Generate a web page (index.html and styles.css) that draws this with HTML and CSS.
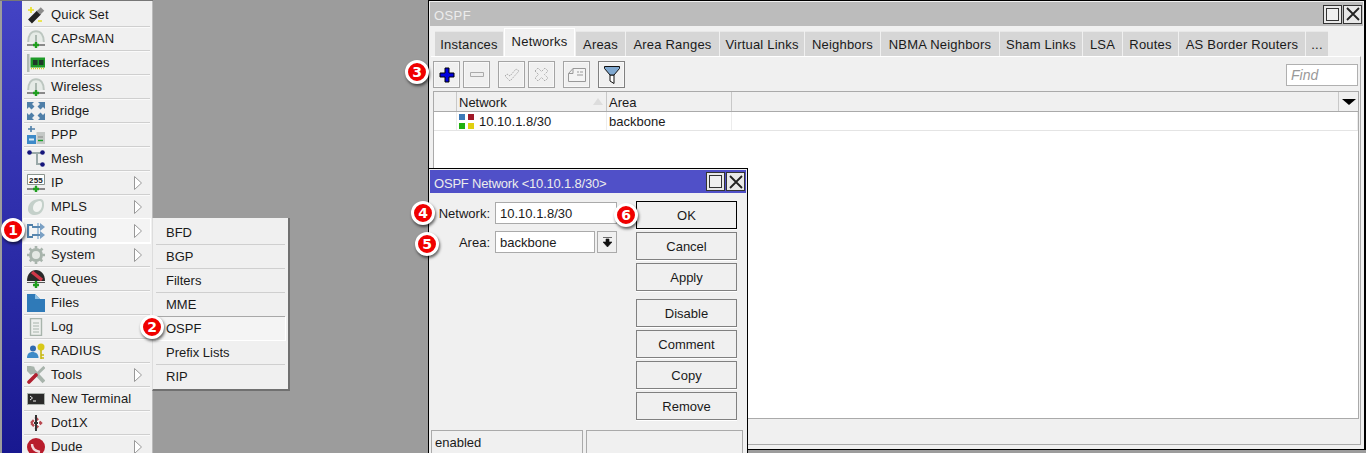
FILE: index.html
```html
<!DOCTYPE html>
<html lang="en">

<head>
    <meta charset="UTF-8">
    <meta name="viewport" content="width=device-width, initial-scale=1.0">
    <title>OSPF Network</title>
    <link rel="stylesheet" href="styles.css">
</head>

<body>
    <svg class="defs" width="0" height="0">
        <symbol id="i-antenna" viewBox="0 0 18 18">
            <path d="M1 12C1 5 4.5 1.2 9 1.2S17 5 17 12z" fill="#e6ebe7"/>
            <path d="M1.2 12C1.2 5 4.5 1.2 9 1.2s7.8 3.800 7.8 10.8" fill="none" stroke="#bcc6c0" stroke-width="2"/>
            <path d="M9 5v9" stroke="#9aa8a0" stroke-width="1.5"/>
            <path d="M0 15h18" stroke="#444" stroke-width="1.2"/>
            <path d="M9 12v6M6 15h6" stroke="#1f9e1f" stroke-width="2.4"/>
        </symbol>
        <symbol id="i-arrow" viewBox="0 0 8 14">
            <path d="M.5 .5L7.5 7 .5 13.5z" fill="#fff" stroke="#999"/>
        </symbol>
    </svg>

    <nav class="sidebar">
        <div class="side-strip"></div>
        <ul class="menu">
            <li class="item">
                <svg class="ico" viewBox="0 0 18 18"><path d="M3 15.5L12 6.5" stroke="#222" stroke-width="5.5"/><path d="M11.5 7L15.5 3" stroke="#8c8c8c" stroke-width="5"/><path d="M4 1v6M1 4h6M11 15h4" stroke="#e8e020" stroke-width="1.6"/></svg>
                <span>Quick Set</span>
            </li>
            <li class="item">
                <svg class="ico"><use href="#i-antenna"/></svg>
                <span>CAPsMAN</span>
            </li>
            <li class="item">
                <svg class="ico" viewBox="0 0 18 18"><path d="M0 0h2.500v18H0z" fill="#b0bab4"/><path d="M3.500 3.500h15v10h-15z" fill="#1e9a28"/><path d="M6 6h4.500v5H6zM12 6h4.500v5H12z" fill="#1f3a28"/><path d="M4 14.500h14" stroke="#d4d020" stroke-width="1.6" stroke-dasharray="1 1"/></svg>
                <span>Interfaces</span>
            </li>
            <li class="item">
                <svg class="ico"><use href="#i-antenna"/></svg>
                <span>Wireless</span>
            </li>
            <li class="item">
                <svg class="ico" viewBox="0 0 18 18" fill="#4f7fa8"><path d="M0 0h7L5 2l2.500 2.500-3 3L2 5 0 7zM18 0v7l-2-2-2.500 2.500-3-3L13 2l-2-2zM0 18v-7l2 2 2.500-2.500 3 3L5 16l2 2zM18 18h-7l2-2-2.500-2.500 3-3L16 13l2-2z"/></svg>
                <span>Bridge</span>
            </li>
            <li class="item">
                <svg class="ico" viewBox="0 0 18 18"><path d="M4 0v6M1 3h7" stroke="#4f7fa8" stroke-width="1.6"/><path d="M0 9h9v9H0z" fill="#3d8ac8"/><path d="M2 12.500h5v2H2z" fill="#d8eaf6"/><path d="M9.500 6H18v12H9.500z" fill="#c4c8c6"/><path d="M11 11h5" stroke="#888"/><path d="M11 14.500h5" stroke="#18a028" stroke-width="1.4"/></svg>
                <span>PPP</span>
            </li>
            <li class="item">
                <svg class="ico" viewBox="0 0 18 18"><path d="M3 3h13M10 3v11h6" fill="none" stroke="#9aa8a8" stroke-width="2"/><circle cx="2.5" cy="2.5" r="2.3" fill="#16167c"/><circle cx="15.5" cy="2.5" r="2.3" fill="#16167c"/><circle cx="15.5" cy="14.5" r="2.3" fill="#16167c"/></svg>
                <span>Mesh</span>
            </li>
            <li class="item">
                <svg class="ico" viewBox="0 0 18 18"><path d="M.5 .5h17v10H.5z" fill="#fff" stroke="#8a948e"/><text x="9" y="8.5" class="ico-text">255</text><path d="M9 10v3" stroke="#8a9a90"/><path d="M0 15h18" stroke="#444" stroke-width="1.2"/><path d="M9 12v6M6 15h6" stroke="#1f9e1f" stroke-width="2.4"/></svg>
                <span>IP</span>
                <svg class="arrow"><use href="#i-arrow"/></svg>
            </li>
            <li class="item">
                <svg class="ico" viewBox="0 0 18 18"><path d="M1 11C1 5 6 1 13 1c3 0 4 2 4 6 0 6-4 10-9 10-4 0-7-2-7-6z" fill="#c4d0ca"/><path d="M6 10c0-3 2-6 6-7 3 0 3 2 3 4 0 4-3 7-5 7-3 0-4-2-4-4z" fill="#f2f4f2"/></svg>
                <span>MPLS</span>
                <svg class="arrow"><use href="#i-arrow"/></svg>
            </li>
            <li class="item item-open">
                <svg class="ico" viewBox="0 0 18 18"><path d="M6 3H1v12h5" fill="none" stroke="#4f7fa8" stroke-width="2.2"/><path d="M11 1v16" stroke="#a8c4dc" stroke-width="2"/><path d="M5 5h8M5 13h8" stroke="#5a88b0" stroke-width="2.2"/><path d="M13 1l5 4-5 4zM13 9l5 4-5 4z" fill="#7aa0c4"/></svg>
                <span>Routing</span>
                <svg class="arrow"><use href="#i-arrow"/></svg>
            </li>
            <li class="item">
                <svg class="ico" viewBox="0 0 18 18"><circle cx="9" cy="9" r="5.5" fill="#e4e8e4" stroke="#a8b4ac" stroke-width="3"/><path d="M9 0v18M0 9h18M2.500 2.500l13 13M15.500 2.500l-13 13" stroke="#a8b4ac" stroke-width="2.6" stroke-dasharray="2.6 12.8"/></svg>
                <span>System</span>
                <svg class="arrow"><use href="#i-arrow"/></svg>
            </li>
            <li class="item">
                <svg class="ico" viewBox="0 0 18 18"><path d="M0 11C0 4 4 0 9 0s9 4 9 11z" fill="#2a2a2a"/><path d="M5 2l10 8" stroke="#d03848" stroke-width="3.4"/><path d="M0 12.500h18" stroke="#555"/><path d="M9 11v7M6 15h6" stroke="#1f9e1f" stroke-width="2.4"/></svg>
                <span>Queues</span>
            </li>
            <li class="item">
                <svg class="ico" viewBox="0 0 18 18"><path d="M0 0h8l5 5h5v13H0z" fill="#2f7ab8"/><path d="M8 0l5 5H8z" fill="#8cc0e4"/></svg>
                <span>Files</span>
            </li>
            <li class="item">
                <svg class="ico" viewBox="0 0 18 18"><path d="M3.500 .5h11v17h-11z" fill="#eef0ee" stroke="#a8b4ac" stroke-width="1.4"/><path d="M6 5h6M6 8h6M6 11h6M6 14h6" stroke="#a8b4ac"/></svg>
                <span>Log</span>
            </li>
            <li class="item">
                <svg class="ico" viewBox="0 0 18 18"><circle cx="6" cy="6.5" r="3" fill="#2f6ab0"/><path d="M0 16c0-4 2-6 5.500-6s6 2 6 6z" fill="#3d8ac8"/><circle cx="14" cy="5" r="3.5" fill="#d8c818"/><path d="M14 8v9M14 13h3M14 16h3" stroke="#c8b810" stroke-width="1.6"/></svg>
                <span>RADIUS</span>
            </li>
            <li class="item">
                <svg class="ico" viewBox="0 0 18 18"><path d="M4 2l13 14" stroke="#a8b4ac" stroke-width="4"/><path d="M1 1l5 1 1 4-3 1-3-3zM17.500 1L8 10" fill="#a8b4ac" stroke="#a8b4ac" stroke-width="3"/><path d="M9 9l-7 7" stroke="#b02030" stroke-width="3.6" stroke-linecap="round"/></svg>
                <span>Tools</span>
                <svg class="arrow"><use href="#i-arrow"/></svg>
            </li>
            <li class="item">
                <svg class="ico" viewBox="0 0 18 18"><path d="M.5 3.500h17v11H.5z" fill="#2a2a2a" stroke="#aab0ac"/><path d="M3 6l2.500 2L3 10M6 11h3" fill="none" stroke="#eee"/></svg>
                <span>New Terminal</span>
            </li>
            <li class="item">
                <svg class="ico" viewBox="0 0 18 18"><path d="M4 9l5-5 5 5-5 5z" fill="#fff" stroke="#b84850" stroke-width="2.4" stroke-dasharray="4 2"/><path d="M9 1v16" stroke="#333" stroke-width="2"/><path d="M7 9h4" stroke="#333" stroke-width="2"/></svg>
                <span>Dot1X</span>
            </li>
            <li class="item">
                <svg class="ico" viewBox="0 0 18 18"><circle cx="9" cy="9" r="9" fill="#b81c2c"/><path d="M5 6c0 5 3 7 8 8" fill="none" stroke="#f4d8dc" stroke-width="2.4"/></svg>
                <span>Dude</span>
                <svg class="arrow"><use href="#i-arrow"/></svg>
            </li>
        </ul>
    </nav>

    <ul class="submenu">
        <li class="sub-item">BFD</li>
        <li class="sub-item">BGP</li>
        <li class="sub-item">Filters</li>
        <li class="sub-item">MME</li>
        <li class="sub-item sub-active">OSPF</li>
        <li class="sub-item">Prefix Lists</li>
        <li class="sub-item">RIP</li>
    </ul>

    <section class="win win-ospf">
        <header class="titlebar titlebar-idle">
            <span class="title">OSPF</span>
            <div class="win-btn"><i class="max-box"></i></div>
            <div class="win-btn">
                <svg width="14" height="14" viewBox="0 0 14 14"><path d="M1 1l12 12M13 1L1 13" stroke="#222" stroke-width="1.8"/></svg>
            </div>
        </header>
        <div class="tabs">
            <div class="tab">Instances</div>
            <div class="tab tab-on">Networks</div>
            <div class="tab">Areas</div>
            <div class="tab">Area Ranges</div>
            <div class="tab">Virtual Links</div>
            <div class="tab">Neighbors</div>
            <div class="tab">NBMA Neighbors</div>
            <div class="tab">Sham Links</div>
            <div class="tab">LSA</div>
            <div class="tab">Routes</div>
            <div class="tab">AS Border Routers</div>
            <div class="tab">...</div>
        </div>
        <div class="panel">
            <div class="toolbar">
                <button class="tool">
                    <svg width="16" height="16" viewBox="0 0 16 16"><path d="M6 1h4v5h5v4h-5v5H6v-5H1V6h5z" fill="#0000e0" stroke="#000"/></svg>
                </button>
                <button class="tool">
                    <svg width="14" height="6" viewBox="0 0 14 6"><path d="M.5 .5h13v4H.5z" fill="#eee" stroke="#aaa"/></svg>
                </button>
                <button class="tool tool-group">
                    <svg width="16" height="14" viewBox="0 0 16 14"><path d="M1 8l2-2 3 2 6-7 3 2-9 10z" fill="none" stroke="#aaa" stroke-dasharray="1.5 1"/></svg>
                </button>
                <button class="tool">
                    <svg width="15" height="15" viewBox="0 0 15 15"><path d="M1 4l3-3 3.500 3.500L11 1l3 3-3.500 3.500L14 11l-3 3-3.500-3.500L4 14l-3-3 3.500-3.500z" fill="none" stroke="#aaa" stroke-dasharray="1.5 1"/></svg>
                </button>
                <button class="tool tool-group">
                    <svg width="18" height="14" viewBox="0 0 18 14"><path d="M.5 5.500L5 .5h12.500v13H.5zM.5 5.500H5V.5" fill="#f4f4f4" stroke="#999"/><path d="M9 4h2M12 4h3M9 7h6" stroke="#999"/></svg>
                </button>
                <button class="tool tool-group tool-dark">
                    <svg width="16" height="18" viewBox="0 0 16 18"><path d="M6 9h4v8.500L6 15z" fill="#fff" stroke="#111"/><path d="M.5 .5h15v2L10 9H6L.5 2.500z" fill="#7fa8d0" stroke="#111"/></svg>
                </button>
                <div class="find">Find</div>
            </div>
            <div class="table">
                <div class="thead">
                    <div class="cell cell-first"></div>
                    <div class="cell cell-net">Network<i class="sort"></i></div>
                    <div class="cell cell-area">Area</div>
                    <div class="cell cell-fill"></div>
                    <div class="cell cell-drop"><i class="drop-tri"></i></div>
                </div>
                <div class="row">
                    <div class="cell cell-first"></div>
                    <div class="cell cell-net">
                        <svg class="net-ico" width="15" height="15" viewBox="0 0 15 15"><path d="M0 0h6v6H0z" fill="#3d7ab8"/><path d="M9 0h6v6H9z" fill="#a01828"/><path d="M0 9h6v6H0z" fill="#20b010"/><path d="M9 9h6v6H9z" fill="#e0d010"/></svg>
                        10.10.1.8/30
                    </div>
                    <div class="cell cell-area">backbone</div>
                    <div class="cell cell-fill"></div>
                </div>
            </div>
        </div>
    </section>

    <section class="win win-dialog">
        <header class="titlebar titlebar-on">
            <span class="title">OSPF Network &lt;10.10.1.8/30&gt;</span>
            <div class="win-btn"><i class="max-box"></i></div>
            <div class="win-btn">
                <svg width="14" height="14" viewBox="0 0 14 14"><path d="M1 1l12 12M13 1L1 13" stroke="#222" stroke-width="1.8"/></svg>
            </div>
        </header>
        <div class="dlg-body">
            <div class="form">
                <div class="field">
                    <label>Network:</label>
                    <div class="input input-wide">10.10.1.8/30</div>
                </div>
                <div class="field">
                    <label>Area:</label>
                    <div class="input">backbone</div>
                    <div class="pick">
                        <svg width="9" height="10" viewBox="0 0 9 10"><path d="M0 .5h9M3 2h3v3h3L4.5 10 0 5h3z" fill="#111" stroke="#111" stroke-width=".6"/></svg>
                    </div>
                </div>
            </div>
            <div class="actions">
                <button class="act act-default">OK</button>
                <button class="act">Cancel</button>
                <button class="act act-gap">Apply</button>
                <button class="act">Disable</button>
                <button class="act">Comment</button>
                <button class="act">Copy</button>
                <button class="act">Remove</button>
            </div>
        </div>
        <div class="dlg-status">
            <div class="stat stat-a">enabled</div>
            <div class="stat stat-b"></div>
        </div>
    </section>

    <span class="badge badge-1">1</span>
    <span class="badge badge-2">2</span>
    <span class="badge badge-3">3</span>
    <span class="badge badge-4">4</span>
    <span class="badge badge-5">5</span>
    <span class="badge badge-6">6</span>
</body>

</html>
```
FILE: styles.css
```css
* {
    box-sizing: border-box;
    padding: 0;
    margin: 0;
}

html,
body {
    height: 100%;
    overflow: hidden;
}

body {
    position: relative;
    background-color: #9c9c9c;
    font-family: "Liberation Sans", Arial, sans-serif;
    font-size: 13px;
    color: #1a1a1a;
}

ul {
    list-style: none;
}

.defs {
    position: absolute;
}

/* left menu */
.sidebar {
    display: flex;
    width: 153px;
    height: 100%;
    padding-left: 2px;
    border-top: 1px solid #777;
}

.side-strip {
    width: 20px;
    background: linear-gradient(#4343c4, #181890);
}

.menu {
    flex: 1;
    padding: 2px 2px 0;
    background-color: #f0f0f0;
    border-right: 1px solid #bbb;
    letter-spacing: .15px;
}

.item {
    display: flex;
    align-items: center;
    height: 24px;
    border-bottom: 1px solid #cfcfcf;
    box-shadow: 0 1px 0 #fafafa;
}

.item-open {
    background-color: #f4f4f4;
    outline: 1px solid #fff;
    border-bottom-color: #fff;
}

.ico {
    flex: none;
    width: 18px;
    height: 18px;
    margin: 0 6px 0 3px;
}

.ico-text {
    font-size: 8px;
    font-weight: bold;
    text-anchor: middle;
    fill: #222;
}

.arrow {
    width: 8px;
    height: 14px;
    margin-left: auto;
    margin-right: 8px;
}

/* routing flyout */
.submenu {
    position: absolute;
    left: 152px;
    top: 218px;
    width: 138px;
    height: 173px;
    padding: 3px 3px 0;
    background-color: #f0f0f0;
    border-left: 1px solid #ddd;
    border-right: 2px solid #707070;
    border-bottom: 2px solid #707070;
}

.sub-item {
    display: flex;
    align-items: center;
    height: 24px;
    padding-left: 10px;
    border-bottom: 1px solid #cfcfcf;
}

.sub-item:last-child {
    border-bottom-color: transparent;
}

.sub-active {
    background-color: #f4f4f4;
    border-bottom-color: #fff;
    box-shadow: 0 -1px 0 #a8a8a8, 1px 0 0 #fff;
}

/* windows */
.win {
    position: absolute;
    background-color: #f0f0f0;
    border: 1px solid #000;
    padding: 1px;
}

.win-ospf {
    left: 428px;
    top: 0;
    width: 938px;
    height: 450px;
    border-right-width: 2px;
    display: flex;
    flex-direction: column;
}

.win-dialog {
    left: 428px;
    top: 168px;
    width: 320px;
    height: 300px;
    display: flex;
    flex-direction: column;
}

.titlebar {
    display: flex;
    align-items: center;
    gap: 1px;
    flex: none;
    padding: 0 1px 0 4px;
}

.titlebar-idle {
    height: 24px;
    background-color: #bcbcbc;
}

.titlebar-idle .title {
    padding-top: 2px;
    letter-spacing: .4px;
}

.titlebar-on {
    height: 23px;
    background-color: #5050c8;
}

.titlebar-on .title {
    padding-top: 3px;
    letter-spacing: -.2px;
}

.title {
    flex: 1;
    color: #ececec;
}

.win-btn {
    display: flex;
    align-items: center;
    justify-content: center;
    width: 19px;
    height: 19px;
    background-color: #e8e8e8;
    border: 1px solid #333;
}

.max-box {
    display: block;
    width: 13px;
    height: 13px;
    background-color: #f0f0f0;
    border: 1px solid #333;
}

/* tabs */
.tabs {
    display: flex;
    align-items: flex-end;
    gap: 1px;
    flex: none;
    height: 30px;
    padding-left: 5px;
    letter-spacing: .2px;
}

.tab {
    height: 25px;
    line-height: 25px;
    text-align: center;
    background-color: #d6d6d6;
    border-top: 1px solid #e8e8e8;
    white-space: nowrap;
}

.tab:nth-child(1) { width: 68px; }
.tab:nth-child(2) { width: 71px; }
.tab:nth-child(3) { width: 49px; }
.tab:nth-child(4) { width: 93px; }
.tab:nth-child(5) { width: 84px; }
.tab:nth-child(6) { width: 75px; }
.tab:nth-child(7) { width: 118px; }
.tab:nth-child(8) { width: 82px; }
.tab:nth-child(9) { width: 39px; }
.tab:nth-child(10) { width: 55px; }
.tab:nth-child(11) { width: 126px; }
.tab:nth-child(12) { width: 22px; }

.tab-on {
    height: 28px;
    line-height: 26px;
    background-color: #f0f0f0;
    border: 1px solid #fff;
    border-bottom: none;
}

.panel {
    display: flex;
    flex: 1;
    flex-direction: column;
    margin: 0 2px 3px 1px;
    padding: 0 1px 25px 2px;
    border-top: 1px solid #fff;
    border-right: 1px solid #aaa;
    border-bottom: 1px solid #aaa;
}

.toolbar {
    display: flex;
    align-items: center;
    gap: 3px;
    flex: none;
    height: 34px;
    padding: 1px 1px 0 0;
}

.tool {
    display: flex;
    align-items: center;
    justify-content: center;
    width: 27px;
    height: 27px;
    background-color: #f0f0f0;
    border: 1px solid #a4a4a4;
    box-shadow: inset 0 0 0 1px #f8f8f8;
}

.tool-group {
    margin-left: 5px;
}

.tool-dark {
    border-color: #808080;
}

.find {
    width: 72px;
    height: 22px;
    line-height: 21px;
    margin-left: auto;
    padding-left: 4px;
    background-color: #fff;
    border: 1px solid #b0b0b0;
    color: #999;
    font-style: italic;
    font-size: 14px;
}

.table {
    flex: 1;
    background-color: #fff;
    border-left: 1px solid #aaa;
    border-right: 1px solid #aaa;
    border-bottom: 1px solid #aaa;
}

.thead {
    display: flex;
    height: 21px;
    background-color: #f0f0f0;
    border-top: 1px solid #aaa;
    border-bottom: 1px solid #aaa;
}

.thead .cell {
    padding-top: 1px;
}

.row {
    display: flex;
    height: 19px;
    border-bottom: 1px solid #e4e4e4;
}

.cell {
    position: relative;
    display: flex;
    align-items: center;
    padding-left: 2px;
    border-right: 1px solid #c8c8c8;
}

.row .cell {
    border-right-color: #ececec;
}

.cell-first {
    width: 23px;
}

.cell-net {
    width: 150px;
}

.cell-area {
    width: 125px;
}

.cell-fill {
    flex: 1;
}

.cell-drop {
    width: 19px;
    border-right: none;
    justify-content: center;
    padding-left: 0;
}

.net-ico {
    margin-right: 5px;
}

.sort {
    position: absolute;
    right: 3px;
    top: 6px;
    border-left: 5px solid transparent;
    border-right: 5px solid transparent;
    border-bottom: 7px solid #ddd;
}

.drop-tri {
    border-left: 7px solid transparent;
    border-right: 7px solid transparent;
    border-top: 6px solid #000;
}

/* dialog */
.dlg-body {
    display: flex;
    flex: none;
    height: 237px;
    padding-top: 8px;
}

.form {
    display: flex;
    flex-direction: column;
    gap: 7px;
    width: 206px;
    padding-top: 1px;
}

.field {
    display: flex;
    align-items: center;
    height: 22px;
}

.field label {
    width: 60px;
    margin-right: 5px;
    text-align: right;
}

.input {
    width: 100px;
    height: 22px;
    line-height: 20px;
    padding: 1px 0 0 4px;
    background-color: #fff;
    border: 1px solid #aaa;
}

.input-wide {
    width: 122px;
}

.pick {
    display: flex;
    align-items: center;
    justify-content: center;
    width: 20px;
    height: 22px;
    margin-left: 2px;
    border: 1px solid #aaa;
    background-color: #f0f0f0;
}

.actions {
    display: flex;
    flex-direction: column;
    gap: 3px;
    width: 101px;
}

.act {
    height: 28px;
    background-color: #f0f0f0;
    border: 1px solid #808080;
    box-shadow: 0 1px 0 #fff;
    font-family: inherit;
    font-size: 13px;
    color: #1a1a1a;
}

.act-default {
    border-color: #000;
}

.act-gap {
    margin-bottom: 5px;
}

.dlg-status {
    display: flex;
    gap: 3px;
    flex: 1;
    padding-left: 1px;
}

.stat {
    border: 1px solid #aaa;
    padding: 4px 0 0 3px;
}

.stat-a {
    width: 152px;
}

.stat-b {
    width: 157px;
}

/* numbered markers */
.badge {
    position: absolute;
    display: flex;
    align-items: center;
    justify-content: center;
    width: 24px;
    height: 24px;
    background-color: #f00000;
    border: 3px solid #fff;
    border-radius: 50%;
    box-shadow: 1px 2px 3px rgba(0, 0, 0, .6);
    color: #fff;
    font-family: "DejaVu Sans", sans-serif;
    font-size: 14px;
    font-weight: bold;
}

.badge-1 { left: 1px; top: 218px; }
.badge-2 { left: 140px; top: 315px; }
.badge-3 { left: 405px; top: 60px; }
.badge-4 { left: 411px; top: 201px; }
.badge-5 { left: 415px; top: 232px; }
.badge-6 { left: 614px; top: 203px; }
```
